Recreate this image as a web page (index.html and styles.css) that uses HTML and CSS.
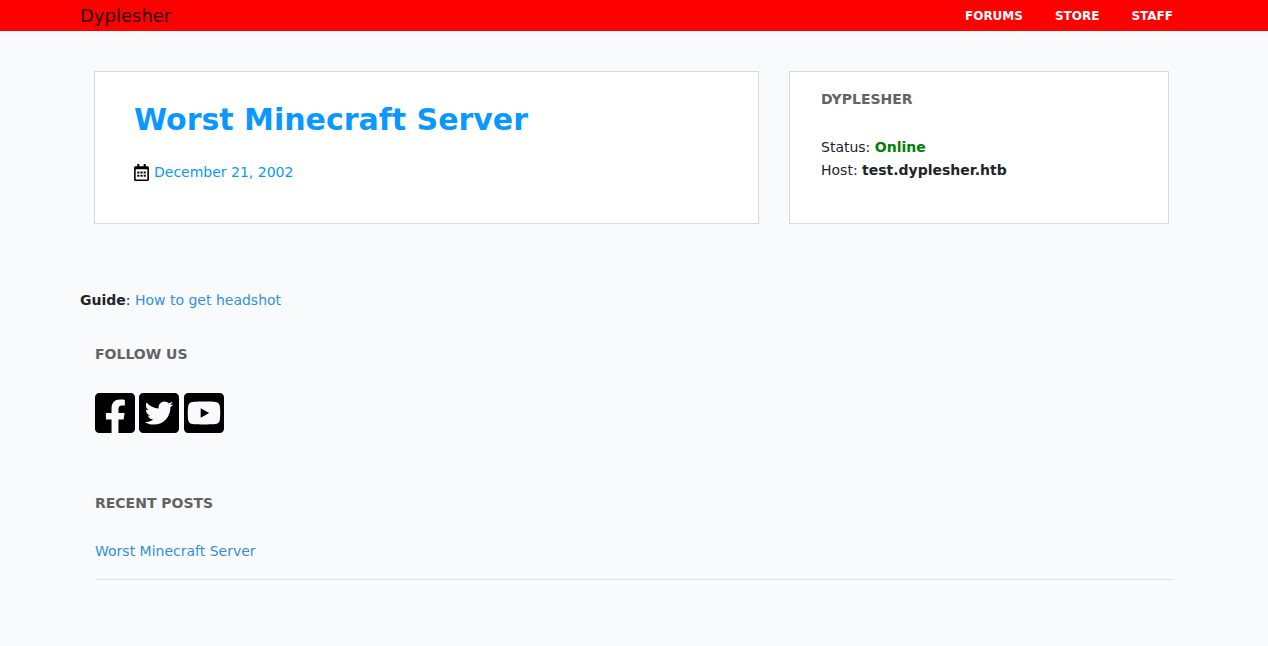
FILE: index.html
```html
<!DOCTYPE html>
<html lang="en">
<head>
<meta charset="utf-8">
<title>Dyplesher</title>
<link rel="stylesheet" href="styles.css">
</head>
<body>
<header class="navbar">
  <div class="container navbar-inner">
    <a class="brand" href="#">Dyplesher</a>
    <nav class="menu">
      <a href="#">FORUMS</a>
      <a href="#">STORE</a>
      <a href="#">STAFF</a>
    </nav>
  </div>
</header>
<main class="container">
  <div class="cards">
    <article class="card post">
      <h1 class="post-title"><a href="#">Worst Minecraft Server</a></h1>
      <div class="post-date">
        <svg class="calendar" viewBox="0 0 448 512" aria-hidden="true"><path d="M148 288h-40c-6.6 0-12-5.4-12-12v-40c0-6.6 5.4-12 12-12h40c6.6 0 12 5.4 12 12v40c0 6.6-5.4 12-12 12zm108-12v-40c0-6.6-5.4-12-12-12h-40c-6.6 0-12 5.4-12 12v40c0 6.6 5.4 12 12 12h40c6.6 0 12-5.4 12-12zm96 0v-40c0-6.6-5.4-12-12-12h-40c-6.6 0-12 5.4-12 12v40c0 6.6 5.4 12 12 12h40c6.6 0 12-5.4 12-12zm-96 96v-40c0-6.6-5.4-12-12-12h-40c-6.6 0-12 5.4-12 12v40c0 6.6 5.4 12 12 12h40c6.6 0 12-5.4 12-12zm-96 0v-40c0-6.6-5.4-12-12-12h-40c-6.6 0-12 5.4-12 12v40c0 6.6 5.4 12 12 12h40c6.6 0 12-5.4 12-12zm192 0v-40c0-6.6-5.4-12-12-12h-40c-6.6 0-12 5.4-12 12v40c0 6.6 5.4 12 12 12h40c6.6 0 12-5.4 12-12zm96-260v352c0 26.5-21.5 48-48 48H48c-26.5 0-48-21.5-48-48V112c0-26.5 21.5-48 48-48h48V12c0-6.6 5.4-12 12-12h40c6.6 0 12 5.4 12 12v52h128V12c0-6.6 5.4-12 12-12h40c6.6 0 12 5.4 12 12v52h48c26.5 0 48 21.5 48 48zm-48 346V160H48v298c0 3.3 2.7 6 6 6h340c3.3 0 6-2.7 6-6z"/></svg>
        <a href="#">December 21, 2002</a>
      </div>
    </article>
    <aside class="card server">
      <h2 class="heading">DYPLESHER</h2>
      <div>Status: <strong class="online">Online</strong></div>
      <div>Host: <strong>test.dyplesher.htb</strong></div>
    </aside>
  </div>
  <p class="guide"><strong>Guide</strong>: <a class="link" href="#">How to get headshot</a></p>
  <section class="section follow">
    <h2 class="heading">FOLLOW US</h2>
    <div class="social">
      <a href="#" aria-label="Facebook"><svg viewBox="0 32 448 448"><path d="M400 32H48A48 48 0 0 0 0 80v352a48 48 0 0 0 48 48h137.25V327.69h-63V256h63v-54.64c0-62.15 37-96.48 93.67-96.48 27.14 0 55.52 4.84 55.52 4.84v61h-31.27c-30.81 0-40.42 19.12-40.42 38.73V256h68.78l-11 71.69h-57.78V480H400a48 48 0 0 0 48-48V80a48 48 0 0 0-48-48z"/></svg></a>
      <a href="#" aria-label="Twitter"><svg viewBox="0 32 448 448"><path d="M400 32H48C21.5 32 0 53.5 0 80v352c0 26.5 21.5 48 48 48h352c26.5 0 48-21.5 48-48V80c0-26.5-21.5-48-48-48zm-48.9 158.8c.2 2.8.2 5.7.2 8.5 0 86.7-66 186.6-186.6 186.6-37.2 0-71.7-10.8-100.7-29.4 5.3.6 10.4.8 15.8.8 30.7 0 58.9-10.4 81.4-28-28.8-.6-53-19.5-61.3-45.5 10.1 1.5 19.2 1.5 29.6-1.2-30-6.1-52.5-32.5-52.5-64.4v-.8c8.7 4.9 18.9 7.9 29.6 8.3a65.447 65.447 0 0 1-29.2-54.6c0-12.2 3.2-23.4 8.9-33.1 32.3 39.8 80.8 65.8 135.2 68.6-9.3-44.5 24-80.6 64-80.6 18.9 0 35.9 7.9 47.9 20.7 14.8-2.8 29-8.3 41.6-15.8-4.9 15.2-15.2 28-28.8 36.1 13.2-1.4 26-5.1 37.8-10.2-8.9 13.1-20.1 24.7-32.9 34z"/></svg></a>
      <a href="#" aria-label="YouTube"><svg viewBox="0 32 448 448"><path d="M186.8 202.1l95.2 54.1-95.2 54.1V202.1zM448 80v352c0 26.5-21.5 48-48 48H48c-26.5 0-48-21.5-48-48V80c0-26.5 21.5-48 48-48h352c26.5 0 48 21.5 48 48zm-42 176.3s0-59.6-7.6-88.2c-4.2-15.8-16.5-28.2-32.2-32.4C337.9 128 224 128 224 128s-113.9 0-142.2 7.7c-15.7 4.2-28 16.6-32.2 32.4-7.6 28.5-7.6 88.2-7.6 88.2s0 59.6 7.6 88.2c4.2 15.8 16.5 27.7 32.2 31.9C110.1 384 224 384 224 384s113.9 0 142.2-7.7c15.7-4.2 28-16.1 32.2-31.9 7.6-28.5 7.6-88.1 7.6-88.1z"/></svg></a>
    </div>
  </section>
  <section class="section">
    <h2 class="heading">RECENT POSTS</h2>
    <ul class="recent">
      <li><a class="link" href="#">Worst Minecraft Server</a></li>
    </ul>
  </section>
</main>
</body>
</html>
```
FILE: styles.css
```css
* {
  box-sizing: border-box;
}

body {
  margin: 0;
  background: #f8fafc;
  color: #212529;
  font: 14px/23px "DejaVu Sans", sans-serif;
}

a {
  color: #0998ff;
  text-decoration: none;
}

h1,
h2,
p,
ul {
  margin: 0;
  padding: 0;
}

.container {
  max-width: 1140px;
  margin: 0 auto;
  padding: 0 16px;
}

.navbar {
  background: #ff0000;
}

.navbar-inner {
  display: flex;
  align-items: center;
  justify-content: space-between;
  padding-right: 31px;
  line-height: 31px;
}

.brand {
  color: rgba(0, 0, 0, 0.9);
  font-size: 18px;
}

.menu {
  display: flex;
  gap: 32px;
  font-size: 12px;
  font-weight: bold;
  line-height: 24px;
}

.menu a {
  color: #ffffff;
}

.cards {
  display: grid;
  grid-template-columns: 7fr 4fr;
  gap: 30px;
  padding: 40px 19px 0 14px;
}

.card {
  background: #ffffff;
  border: 1px solid #d9d9d9;
}

.post {
  padding: 24px 39px 39px;
}

.post-title {
  margin-bottom: 17px;
  font-size: 30px;
  line-height: 48px;
}

.post-date {
  display: flex;
  align-items: center;
  gap: 5px;
}

.calendar {
  width: 15px;
  height: 17px;
}

.server {
  padding: 16px 31px 40px;
}

.heading {
  margin-bottom: 25px;
  color: #636363;
  font-size: 14px;
  line-height: 23px;
}

.online {
  color: #008000;
}

.link {
  color: #3490dc;
}

.guide {
  padding: 65px 0 31px;
}

.section {
  padding: 0 15px;
}

.follow {
  padding-bottom: 59px;
}

.social {
  padding-top: 2px;
}

.social svg {
  width: 40px;
  height: 40px;
  vertical-align: top;
}

.recent {
  padding-bottom: 16px;
  border-bottom: 1px solid #dee2e6;
  list-style: none;
}
```
